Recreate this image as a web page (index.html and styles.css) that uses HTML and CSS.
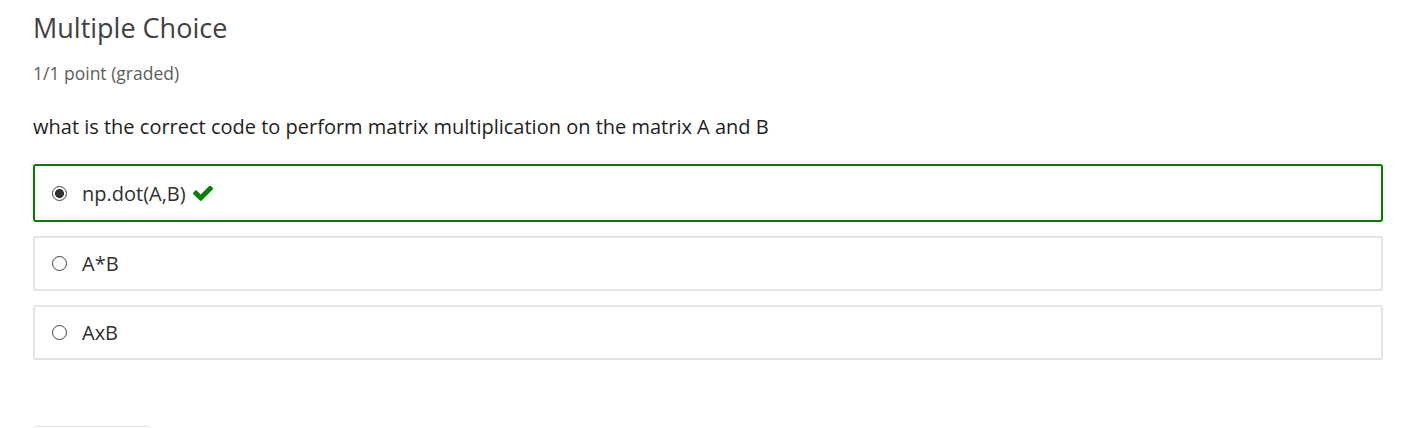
FILE: index.html
```html
<!DOCTYPE html>
<html>
<head>
<meta charset="utf-8">
<link rel="stylesheet" href="styles.css">
</head>
<body>
<div class="problem">
  <h3 class="problem-header">Multiple Choice</h3>
  <div class="problem-progress">1/1 point (graded)</div>
  <p class="question">what is the correct code to perform matrix multiplication on the matrix A and B</p>
  <div class="choices">
    <label class="choice correct">
      <input type="radio" name="q" checked>
      <span class="choice-text">np.dot(A,B)</span>
      <svg class="check" width="20" height="15" viewBox="115 362 1556 1160"><path fill="#008100" d="M1671 566q0 40-28 68l-724 724-136 136q-28 28-68 28t-68-28l-136-136-362-362q-28-28-28-68t28-68l136-136q28-28 68-28t68 28l294 295 656-657q28-28 68-28t68 28l136 136q28 28 28 68z"/></svg>
    </label>
    <label class="choice">
      <input type="radio" name="q">
      <span class="choice-text">A*B</span>
    </label>
    <label class="choice">
      <input type="radio" name="q">
      <span class="choice-text">AxB</span>
    </label>
  </div>
  <div class="actions">
    <button class="submit" type="button" aria-label="Submit"></button>
  </div>
</div>
</body>
</html>
```

FILE: styles.css
```css
html, body {
  margin: 0;
  padding: 0;
  background: #fff;
}
body {
  font-family: "Open Sans", "Liberation Sans", sans-serif;
  color: #313131;
  overflow: hidden;
  height: 428px;
}
.problem {
  padding: 8px 35px 0 33px;
}
.problem-header {
  margin: 0;
  font-size: 27px;
  font-weight: 400;
  line-height: 40px;
  color: #414141;
}
.problem-progress {
  margin-top: 13px;
  font-size: 17.5px;
  line-height: 24px;
  color: #5e5e5e;
}
.question {
  margin: 27px 0 0 0;
  font-size: 20px;
  line-height: 30px;
  color: #1e1e1e;
}
.choices {
  margin-top: 22px;
  display: flex;
  flex-direction: column;
  gap: 14px;
}
.choice {
  display: flex;
  align-items: center;
  height: 55px;
  box-sizing: border-box;
  border: 2px solid #e4e4e4;
  border-radius: 3px;
  padding-left: 17px;
  font-size: 20px;
  color: #313131;
}
.choice.correct {
  border-color: #008100;
  height: 58px;
}
.choice input {
  appearance: none;
  -webkit-appearance: none;
  margin: 0 15px 0 0;
  width: 15px;
  height: 15px;
  border: 1.5px solid #444;
  border-radius: 50%;
  box-sizing: border-box;
  background: #fff;
  flex: none;
}
.choice input:checked {
  background: radial-gradient(circle, #333 0 4.2px, #fff 4.7px);
}
.check {
  margin-left: 7px;
  margin-top: 1px;
}
.actions {
  margin-top: 66px;
}
.submit {
  display: block;
  width: 118px;
  height: 40px;
  border: 1px solid #e0e0e0;
  border-radius: 3px;
  background: #fff;
}
```
